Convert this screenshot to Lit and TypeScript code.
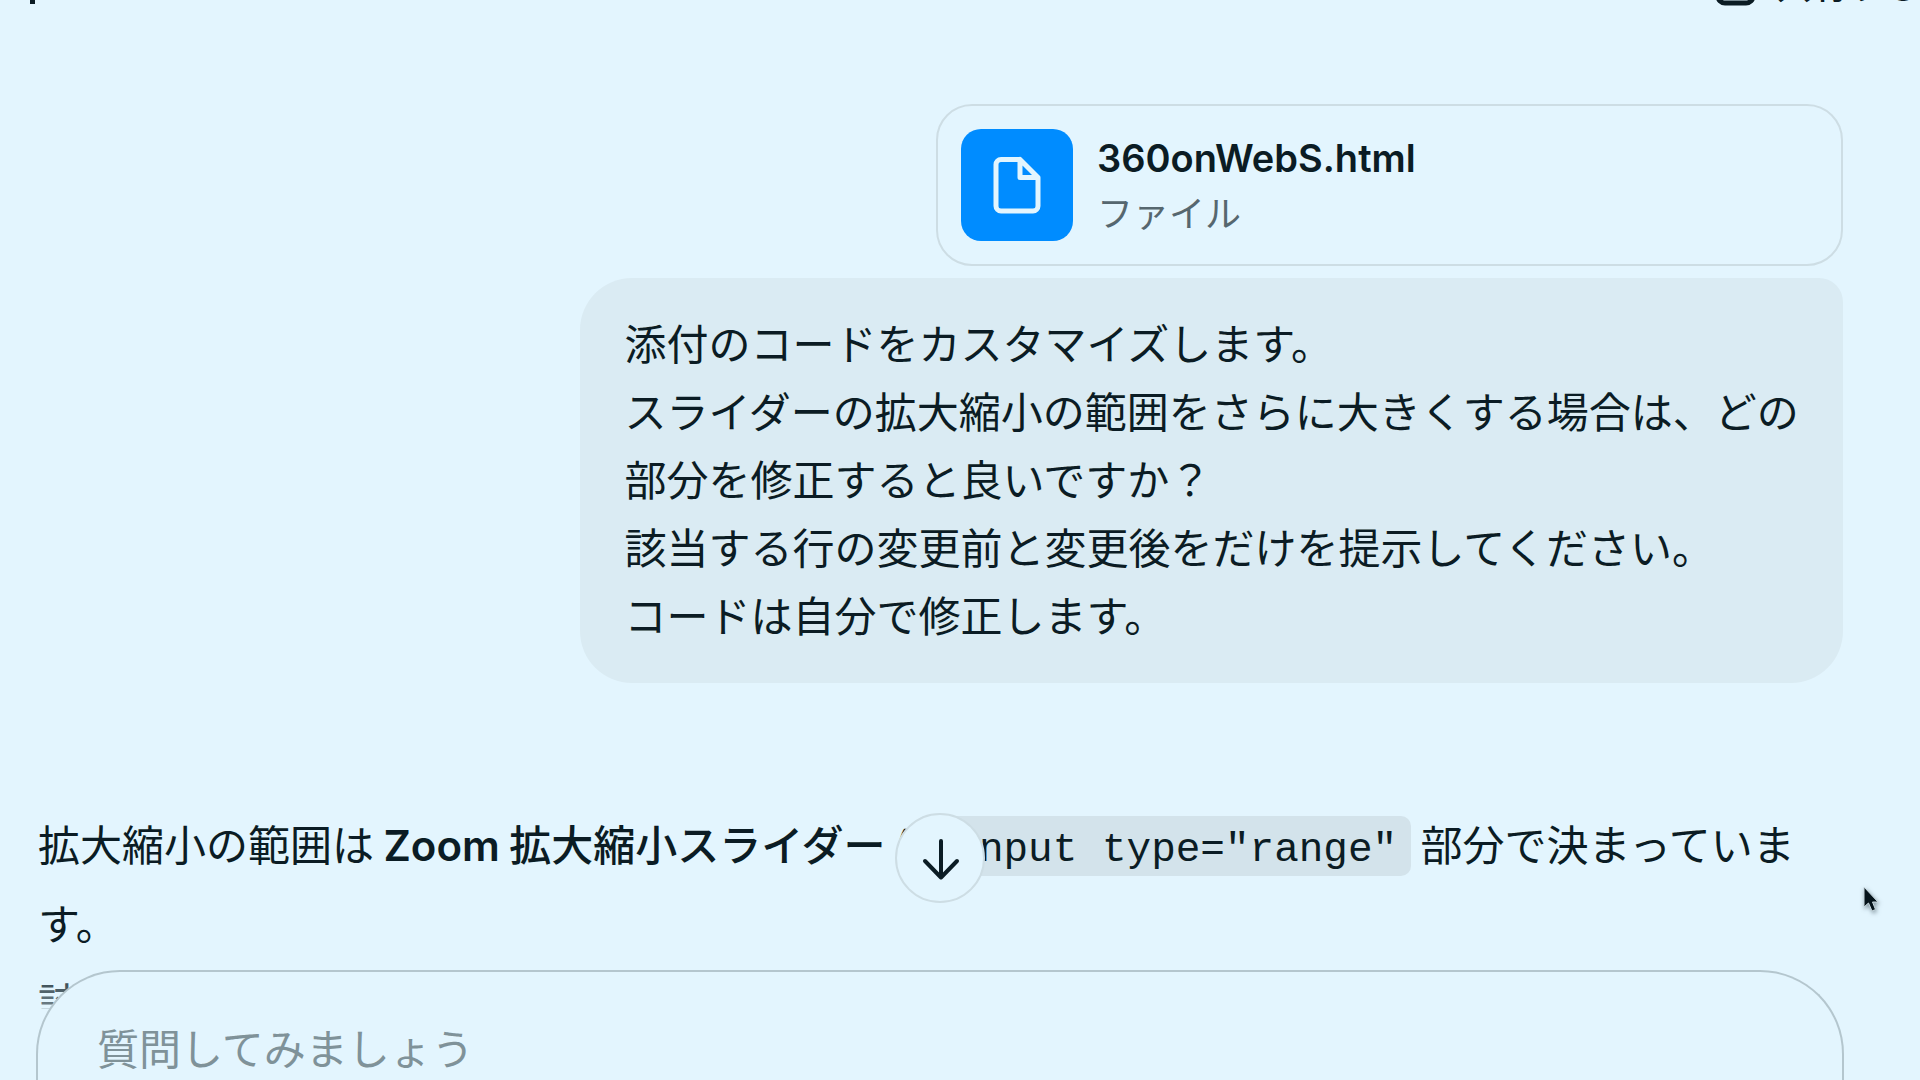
import { LitElement, html, css, svg } from "lit";
import { customElement } from "lit/decorators.js";

const shareIcon = svg`<path d="M8 26v14a7 7 0 0 0 7 7h21a7 7 0 0 0 7-7V26M25 34V6M14 16 25 5l11 11" />`;

@customElement("app-root")
export class AppRoot extends LitElement {
  static styles = css`
    :host {
      --bg: #e3f5fe;
      --bubble: #daebf3;
      --chip: #d3e3eb;
      --line: #cddde4;
      --ink: #0b1c24;
      display: block;
      font-family: "Noto Sans CJK JP", sans-serif;
      color: var(--ink);
    }
    * {
      box-sizing: border-box;
    }
    .app {
      position: relative;
      height: 100vh;
      overflow: hidden;
      background: var(--bg);
    }
    .topbar {
      display: flex;
      align-items: flex-end;
      justify-content: space-between;
      height: 6px;
      overflow: hidden;
      padding: 0 0 0 30px;
    }
    .model {
      display: block;
      width: 5px;
      height: 20px;
      padding: 0;
      margin-bottom: 2px;
      border: 0;
      background: var(--ink);
    }
    .share {
      display: flex;
      flex-shrink: 0;
      align-items: flex-end;
      gap: 16px;
      padding: 0;
      border: 0;
      background: none;
      color: inherit;
      font: 500 36px/36px "Noto Sans CJK JP", sans-serif;
    }
    .share svg {
      display: block;
      stroke-width: 5;
    }
    .share span {
      padding-bottom: 5px;
    }
    .thread {
      display: flex;
      flex-direction: column;
      padding: 98px 77px 0 38px;
    }
    .user {
      display: flex;
      flex-direction: column;
      align-items: flex-end;
      gap: 12px;
    }
    .file {
      display: flex;
      align-items: center;
      gap: 24px;
      width: 50.25%;
      padding: 23px;
      border: 2px solid var(--line);
      border-radius: 36px;
      color: inherit;
      text-decoration: none;
    }
    .thumb {
      display: block;
      flex-shrink: 0;
      border-radius: 20px;
      background: #008cff;
    }
    .meta {
      display: flex;
      flex-direction: column;
    }
    .name {
      font-family: Inter, sans-serif;
      font-size: 38px;
      line-height: 52px;
      font-weight: 600;
    }
    .kind {
      font-size: 36px;
      line-height: 54px;
      color: #56676f;
    }
    .bubble {
      width: 70%;
      margin: 0;
      padding: 30px 40px 35px 45px;
      border-radius: 52px 24px 52px 52px;
      background: var(--bubble);
      font-size: 42px;
      line-height: 68px;
    }
    .answer {
      margin: 120px 0 0;
      font-size: 42px;
      line-height: 79px;
    }
    strong {
      font-weight: 500;
    }
    .latin {
      font-family: Inter, sans-serif;
      font-weight: 600;
      line-height: 48px;
    }
    code {
      margin-left: 5px;
      padding: 11px 14px 3px;
      border-radius: 10px;
      background: var(--chip);
      font: 400 41px/48px "Liberation Mono", monospace;
    }
    .next {
      color: #22343c;
    }
    .dock {
      position: absolute;
      left: 36px;
      right: 76px;
      bottom: 0;
      display: flex;
      flex-direction: column;
      align-items: center;
      gap: 67px;
    }
    .down {
      display: grid;
      place-items: center;
      width: 90px;
      height: 90px;
      padding: 0;
      border: 2px solid var(--line);
      border-radius: 50%;
      background: var(--bg);
      color: inherit;
    }
    .tray {
      width: 100%;
      background: linear-gradient(rgba(227, 245, 254, 0) 0, rgba(227, 245, 254, 0.4) 37px, var(--bg) 39px);
    }
    .composer {
      height: 110px;
      padding: 41px 60px 0 59px;
      border: 2px solid #b4c6ce;
      border-bottom: 0;
      border-radius: 84px 84px 0 0;
      background: var(--bg);
    }
    .prompt {
      display: block;
      width: 100%;
      height: 68px;
      padding: 0;
      border: 0;
      outline: 0;
      background: none;
      color: inherit;
      font: 42px/68px "Noto Sans CJK JP", sans-serif;
    }
    .prompt::placeholder {
      color: #7f9299;
      opacity: 1;
    }
    .pointer {
      position: absolute;
      left: 97%;
      top: 884px;
      filter: drop-shadow(1px 2px 2px rgba(40, 60, 70, 0.5));
    }
    .stroke {
      fill: none;
      stroke: currentColor;
      stroke-width: 4;
      stroke-linecap: round;
      stroke-linejoin: round;
    }
    .light {
      color: var(--bg);
      stroke-width: 5;
    }
  `;

  render() {
    return html`
      <div class="app">
        <header class="topbar">
          <button class="model" aria-label="モデル"></button>
          <button class="share">
            <svg class="stroke" width="50" height="50" viewBox="0 0 50 50">${shareIcon}</svg>
            <span>共有する</span>
          </button>
        </header>

        <main class="thread">
          <section class="user">
            <a class="file" href="#file">
              <svg class="thumb stroke light" width="112" height="112" viewBox="0 0 112 112">
                <path d="M59 30.5H40a5 5 0 0 0-5 5V77a5 5 0 0 0 5 5h32a5 5 0 0 0 5-5V48.500L59 30.500V48.500H77" />
              </svg>
              <span class="meta">
                <span class="name">360onWebS.html</span>
                <span class="kind">ファイル</span>
              </span>
            </a>
            <p class="bubble">
              添付のコードをカスタマイズします。<br />スライダーの拡大縮小の範囲をさらに大きくする場合は、どの部分を修正すると良いですか？<br />該当する行の変更前と変更後をだけを提示してください。<br />コードは自分で修正します。
            </p>
          </section>

          <p class="answer">
            拡大縮小の範囲は <strong><span class="latin">Zoom</span> 拡大縮小スライダー <span class="latin">(</span></strong><code>&lt;input type="range"</code> 部分で決まっています。<br /><span class="next">該</span>
          </p>
        </main>

        <div class="dock">
          <button class="down" aria-label="一番下へ">
            <svg class="stroke" width="86" height="86" viewBox="2 2 86 86">
              <path d="M46 28v36M30 48l16 16.500L62 48" />
            </svg>
          </button>
          <div class="tray">
            <form class="composer">
              <input class="prompt" type="text" aria-label="質問" placeholder="質問してみましょう" />
            </form>
          </div>
        </div>

        <svg class="pointer" width="20" height="32" viewBox="0 0 20 32">
          <path d="M2 3V23L6.500 19l3.500 8 3.500-1.500L10.500 18H16Z" fill="#06141b" stroke="#c9d9e0" stroke-width="1" />
        </svg>
      </div>
    `;
  }
}
